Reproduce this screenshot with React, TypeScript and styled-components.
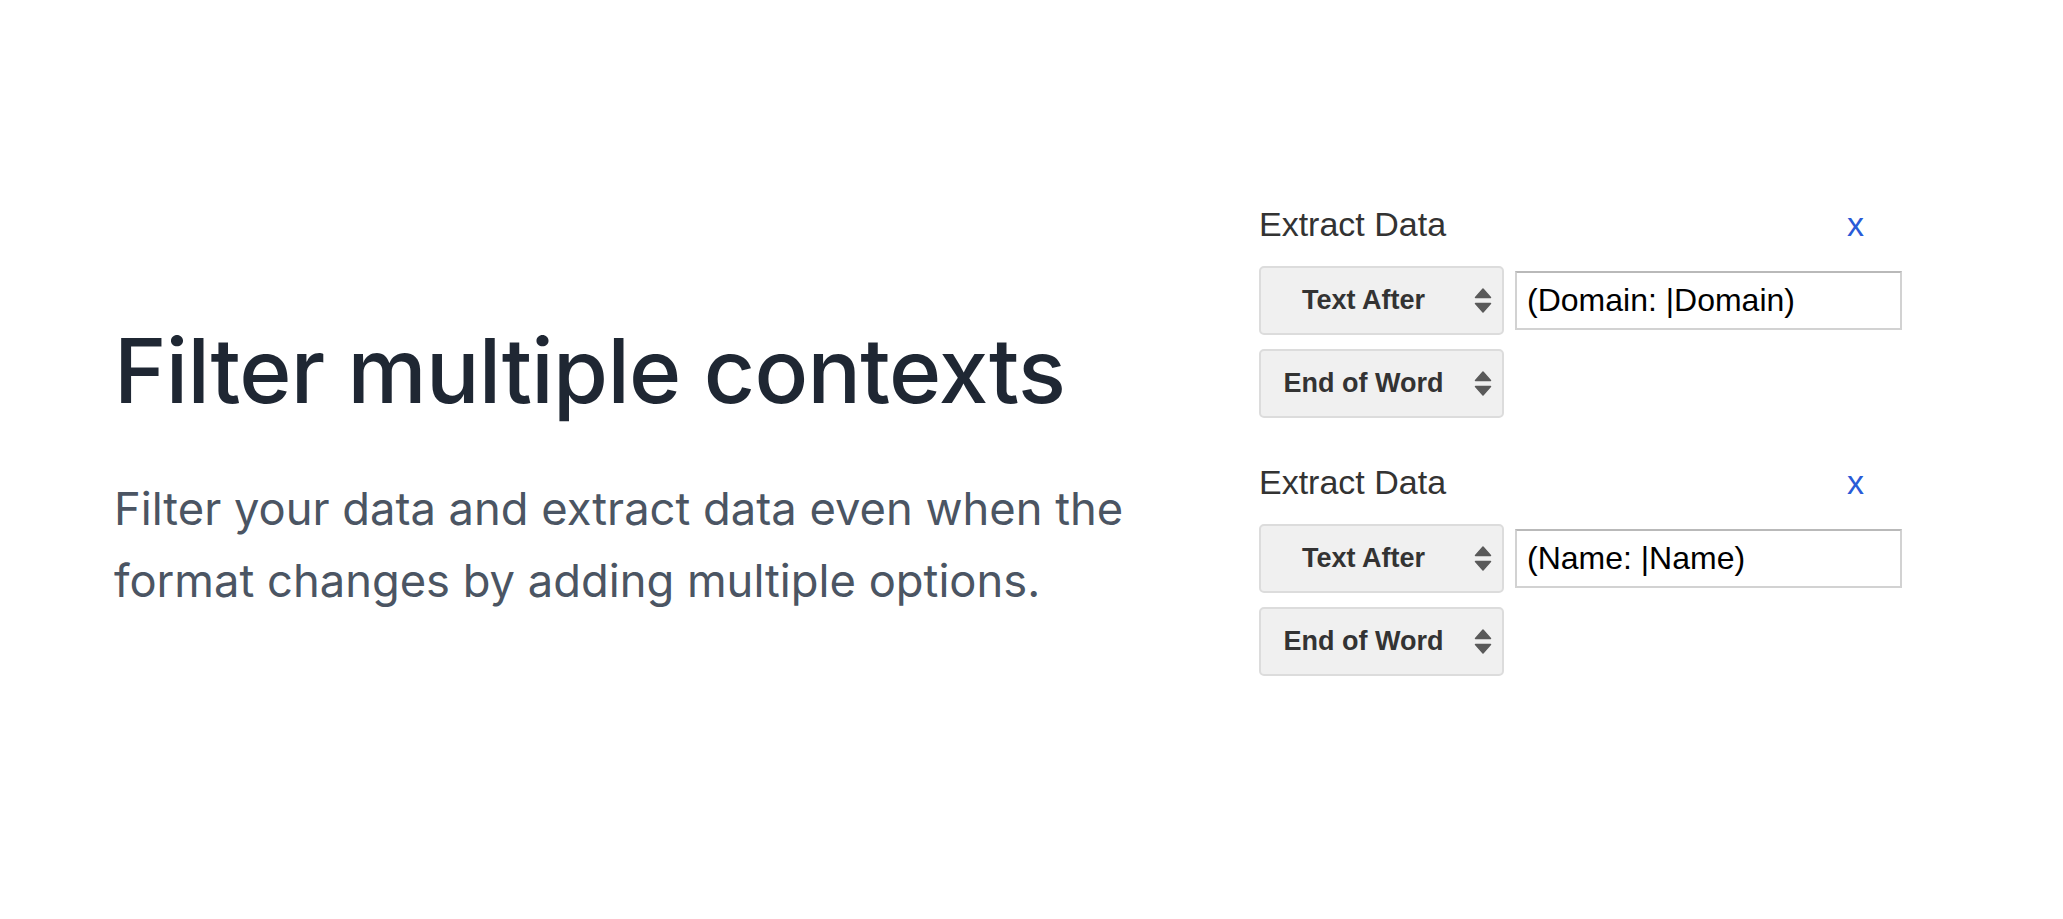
import { createGlobalStyle, styled } from 'styled-components';

const GlobalStyle = createGlobalStyle`
  html, body {
    margin: 0;
    padding: 0;
    background: #ffffff;
  }
`;

const Page = styled.main`
  display: flex;
  align-items: flex-start;
  height: 919px;
  padding-left: 114px;
  box-sizing: border-box;
`;

const Intro = styled.div`
  width: 1145px;
  padding-top: 322px;
  font-family: Inter, "Noto Sans", sans-serif;
`;

const Heading = styled.h2`
  margin: 0;
  font-size: 89px;
  line-height: 1.1;
  font-weight: 500;
  color: #1f2733;
  letter-spacing: -0.7px;
`;

const Lead = styled.p`
  margin: 53px 0 0;
  width: 1080px;
  font-size: 45.3px;
  line-height: 72px;
  font-weight: 400;
  color: #4b5563;
`;

const Panel = styled.div`
  display: flex;
  flex-direction: column;
  gap: 45px;
  padding-top: 205px;
  font-family: "Liberation Sans", Arial, sans-serif;
`;

const Block = styled.section`
  display: flex;
  flex-direction: column;
`;

const TitleRow = styled.div`
  display: flex;
  justify-content: space-between;
  align-items: baseline;
  width: 605px;
  height: 38px;
  line-height: 38px;
  margin-bottom: 23px;
`;

const Title = styled.span`
  font-size: 34px;
  color: #333333;
`;

const Remove = styled.button`
  border: none;
  background: none;
  padding: 0;
  font-family: inherit;
  font-size: 34px;
  line-height: 38px;
  color: #2a5bd7;
  cursor: pointer;
`;

const Rows = styled.div`
  display: flex;
  flex-direction: column;
  gap: 14px;
`;

const Row = styled.div`
  display: flex;
  align-items: center;
  gap: 11px;
`;

const Select = styled.div`
  position: relative;
  display: flex;
  align-items: center;
  justify-content: center;
  width: 245px;
  height: 69px;
  box-sizing: border-box;
  padding-right: 36px;
  background: #f0f0f0;
  border: 2px solid #dcdcdc;
  border-radius: 5px;
  font-size: 27px;
  font-weight: 700;
  color: #333333;
`;

const Arrows = styled.svg`
  position: absolute;
  right: 10px;
  top: 50%;
  transform: translateY(-50%);
`;

const TextBox = styled.input`
  width: 387px;
  height: 59px;
  box-sizing: border-box;
  padding: 0 10px;
  border: 2px solid #d2d2d2;
  border-top-color: #b9b9b9;
  background: #ffffff;
  font-family: "Liberation Sans", Arial, sans-serif;
  font-size: 32px;
  color: #000000;
  outline: none;
`;

function SelectArrows() {
  return (
    <Arrows width="18" height="27" viewBox="0 0 18 27" aria-hidden="true">
      <path d="M9 1.5 L16.5 10 L1.5 10 Z" fill="#5a5a5a" stroke="#5a5a5a" strokeWidth="1.5" strokeLinejoin="round" />
      <path d="M1.5 16 L16.5 16 L9 24.5 Z" fill="#5a5a5a" stroke="#5a5a5a" strokeWidth="1.5" strokeLinejoin="round" />
    </Arrows>
  );
}

type ExtractProps = {
  pattern: string;
};

function ExtractBlock({ pattern }: ExtractProps) {
  return (
    <Block>
      <TitleRow>
        <Title>Extract Data</Title>
        <Remove>x</Remove>
      </TitleRow>
      <Rows>
        <Row>
          <Select>
            Text After
            <SelectArrows />
          </Select>
          <TextBox readOnly value={pattern} />
        </Row>
        <Row>
          <Select>
            End of Word
            <SelectArrows />
          </Select>
        </Row>
      </Rows>
    </Block>
  );
}

export default function App() {
  return (
    <>
      <GlobalStyle />
      <Page>
        <Intro>
          <Heading>Filter multiple contexts</Heading>
          <Lead>
            Filter your data and extract data even when the format changes by adding multiple options.
          </Lead>
        </Intro>
        <Panel>
          <ExtractBlock pattern="(Domain: |Domain)" />
          <ExtractBlock pattern="(Name: |Name)" />
        </Panel>
      </Page>
    </>
  );
}
